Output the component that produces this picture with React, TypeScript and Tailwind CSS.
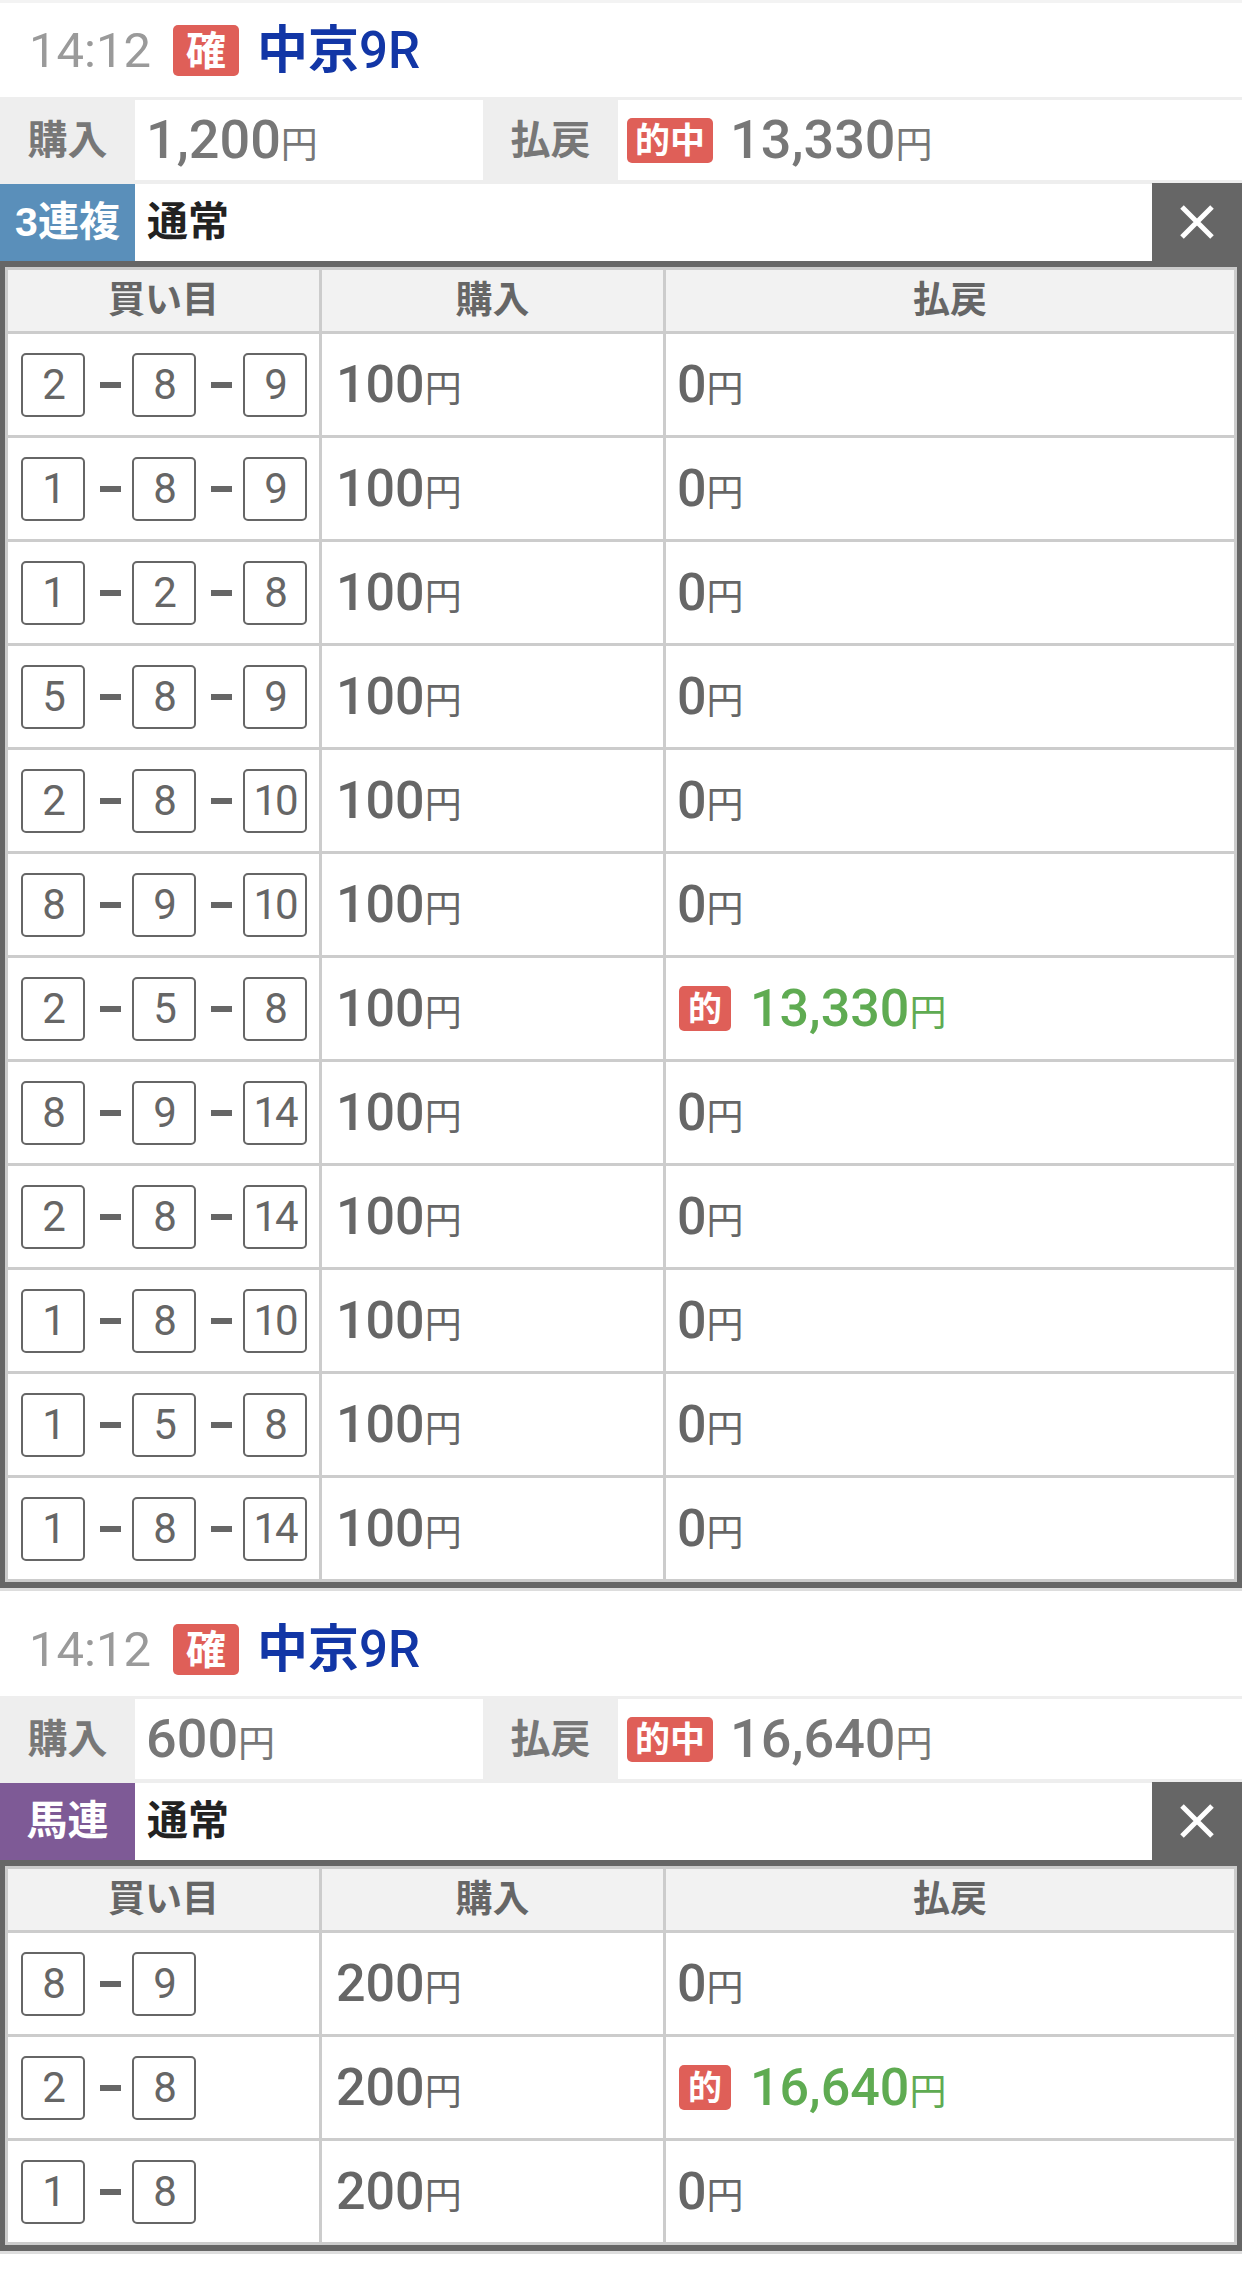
import React from 'react'

type Row = { nums: number[]; hit?: string }
type Section = {
  top: boolean
  total: string
  payout: string
  type: string
  typeBg: string
  amount: string
  rows: Row[]
}

const sections: Section[] = [
  {
    top: true,
    total: '1,200',
    payout: '13,330',
    type: '3連複',
    typeBg: 'bg-[#5a8fba]',
    amount: '100',
    rows: [
      { nums: [2, 8, 9] },
      { nums: [1, 8, 9] },
      { nums: [1, 2, 8] },
      { nums: [5, 8, 9] },
      { nums: [2, 8, 10] },
      { nums: [8, 9, 10] },
      { nums: [2, 5, 8], hit: '13,330' },
      { nums: [8, 9, 14] },
      { nums: [2, 8, 14] },
      { nums: [1, 8, 10] },
      { nums: [1, 5, 8] },
      { nums: [1, 8, 14] },
    ],
  },
  {
    top: false,
    total: '600',
    payout: '16,640',
    type: '馬連',
    typeBg: 'bg-[#7e5a96]',
    amount: '200',
    rows: [{ nums: [8, 9] }, { nums: [2, 8], hit: '16,640' }, { nums: [1, 8] }],
  },
]

// digits look like a medium-weight grotesk in the original
const num = "font-['Roboto','Noto_Sans_CJK_JP',sans-serif]"

function Yen({ value, big, small, color }: { value: string; big: string; small: string; color: string }) {
  return (
    <span className={`${color} ${num} leading-none whitespace-nowrap`}>
      <span className={`${big} font-medium`}>{value}</span>
      <span className={small}>円</span>
    </span>
  )
}

function NumBox({ n }: { n: number }) {
  return (
    <div className={`w-[64px] h-[64px] border-2 border-[#666] rounded-[5px] flex items-center justify-center text-[42px] leading-none text-[#666] tracking-[-2px] ${num}`}>
      {n}
    </div>
  )
}

function BetSection({ s }: { s: Section }) {
  return (
    <div>
      {/* header */}
      <div className={`flex items-center pl-[29px] ${s.top ? 'h-[94px] pt-[1px]' : 'h-[105px] pt-[12px]'}`}>
        <span className={`text-[49px] leading-none text-[#9a9a9a] ${num}`}>14:12</span>
        <span className="ml-[22px] w-[66px] h-[51px] rounded-[5px] bg-[#df5f58] text-white font-bold text-[40px] leading-none flex items-center justify-center">
          確
        </span>
        <span className="ml-[18px] text-[51px] leading-none font-semibold text-[#1236a6]">
          中京<span className={`${num} font-medium`}>9R</span>
        </span>
      </div>

      {/* purchase / payout */}
      <div className="flex h-[87px] border-t-[3px] border-b-[4px] border-[#eee]">
        <div className="w-[135px] bg-[#eee] flex items-center justify-center text-[40px] font-bold text-[#777]">購入</div>
        <div className="w-[348px] bg-white flex items-center pl-[11px]">
          <Yen value={s.total} big="text-[54px]" small="text-[37px]" color="text-[#777]" />
        </div>
        <div className="w-[135px] bg-[#eee] flex items-center justify-center text-[40px] font-bold text-[#777]">払戻</div>
        <div className="flex-1 bg-white flex items-center pl-[9px]">
          <span className="h-[45px] px-[8px] rounded-[5px] bg-[#df5f58] text-white font-bold text-[35px] leading-none flex items-center">
            的中
          </span>
          <span className="ml-[17px]">
            <Yen value={s.payout} big="text-[54px]" small="text-[37px]" color="text-[#777]" />
          </span>
        </div>
      </div>

      {/* bet type */}
      <div className="flex h-[77px] bg-white">
        <div className={`w-[135px] ${s.typeBg} flex items-center justify-center text-white font-bold text-[41px] leading-none`}>
          {s.type}
        </div>
        <div className="flex-1 flex items-center pl-[12px] text-[41px] font-bold text-[#222] leading-none">通常</div>
        <div className="w-[90px] bg-[#666] -mt-[1px] flex items-center justify-center">
          <svg width="36" height="36" viewBox="0 0 36 36">
            <path d="M3 3 L33 33 M33 3 L3 33" stroke="white" strokeWidth="5" />
          </svg>
        </div>
      </div>

      {/* table */}
      <div className="border-x-[5px] border-y-[6px] border-[#666] bg-[#ccc] p-[3px] grid grid-cols-[311px_341px_1fr] gap-[3px]">
        {['買い目', '購入', '払戻'].map((h) => (
          <div key={h} className="h-[61px] bg-[#f2f2f2] flex items-center justify-center text-[37px] font-bold text-[#666] leading-none">
            {h}
          </div>
        ))}
        {s.rows.map((r, i) => (
          <React.Fragment key={i}>
            <div className="h-[101px] bg-white flex items-center pl-[13px]">
              {r.nums.map((n, j) => (
                <React.Fragment key={j}>
                  {j > 0 && <div className="w-[21px] h-[6px] bg-[#666] ml-[15px] mr-[11px]" />}
                  <NumBox n={n} />
                </React.Fragment>
              ))}
            </div>
            <div className="h-[101px] bg-white flex items-center pl-[14px]">
              <Yen value={s.amount} big="text-[52px]" small="text-[37px]" color="text-[#666]" />
            </div>
            <div className="h-[101px] bg-white flex items-center pl-[11px]">
              {r.hit ? (
                <>
                  <span className="ml-[2px] w-[52px] h-[45px] rounded-[5px] bg-[#df5f58] text-white font-bold text-[34px] leading-none flex items-center justify-center">
                    的
                  </span>
                  <span className="ml-[19px]">
                    <Yen value={r.hit} big="text-[52px]" small="text-[37px]" color="text-[#5fab52]" />
                  </span>
                </>
              ) : (
                <Yen value="0" big="text-[52px]" small="text-[37px]" color="text-[#666]" />
              )}
            </div>
          </React.Fragment>
        ))}
      </div>
      <div className="h-[3px] bg-[#ddd]" />
    </div>
  )
}

export default function App() {
  return (
    <div className="w-[1242px] min-h-[2271px] bg-white font-['Liberation_Sans','Noto_Sans_CJK_JP',sans-serif]">
      <div className="h-[3px] bg-[#f3f3f3]" />
      {sections.map((s, i) => (
        <BetSection key={i} s={s} />
      ))}
    </div>
  )
}
